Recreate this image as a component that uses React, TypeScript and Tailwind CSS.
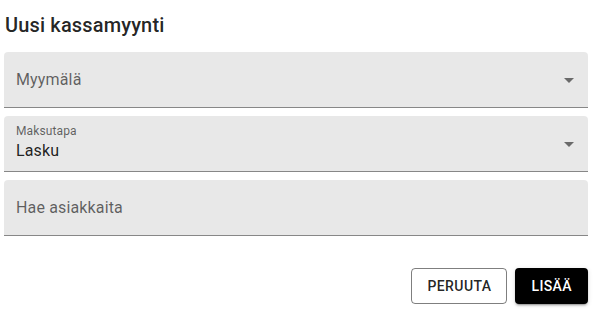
import React from "react";

function Arrow() {
  return (
    <svg viewBox="0 0 24 24" className="absolute right-[7px] top-1/2 -translate-y-1/2 w-6 h-6" fill="rgba(0,0,0,0.54)">
      <path d="M7 10l5 5 5-5z" />
    </svg>
  );
}

export default function App() {
  return (
    <div className="w-[593px] h-[313px] bg-white text-[rgba(0,0,0,0.87)]" style={{ fontFamily: "Roboto, 'Liberation Sans', sans-serif" }}>
      <div className="px-[5px] pt-[9px] h-[52px]">
        <h2 className="text-[20px] leading-[32px] font-medium tracking-[0.0075em]">Uusi kassamyynti</h2>
      </div>
      <div className="pl-[4px] pr-[5px] flex flex-col gap-[8px]">
        <div className="relative h-[56px] bg-[rgba(0,0,0,0.09)] rounded-t-[4px] border-b border-[rgba(0,0,0,0.42)] flex items-center px-[12px]">
          <span className="text-[16px] text-[rgba(0,0,0,0.6)] tracking-[0.00938em]">Myymälä</span>
          <Arrow />
        </div>
        <div className="relative h-[56px] bg-[rgba(0,0,0,0.09)] rounded-t-[4px] border-b border-[rgba(0,0,0,0.42)] flex flex-col px-[12px] pt-[7px]">
          <span className="text-[12px] leading-[16px] text-[rgba(0,0,0,0.6)] tracking-[0.00938em]">Maksutapa</span>
          <span className="text-[16px] leading-[24px] tracking-[0.00938em]">Lasku</span>
          <Arrow />
        </div>
        <div className="relative h-[56px] bg-[rgba(0,0,0,0.09)] rounded-t-[4px] border-b border-[rgba(0,0,0,0.42)] flex items-center px-[12px]">
          <span className="text-[16px] text-[rgba(0,0,0,0.6)] tracking-[0.00938em]">Hae asiakkaita</span>
        </div>
      </div>
      <div className="flex justify-end gap-[8px] pr-[5px] pt-[32px]">
        <button className="h-[36px] px-[15px] border border-[rgba(0,0,0,0.5)] rounded-[4px] text-[14px] font-medium uppercase tracking-[0.02857em] text-[rgba(0,0,0,0.87)]">
          Peruuta
        </button>
        <button className="h-[36px] px-[16px] bg-black text-white rounded-[4px] text-[14px] font-medium uppercase tracking-[0.02857em] shadow-[0_3px_1px_-2px_rgba(0,0,0,0.2),0_2px_2px_0_rgba(0,0,0,0.14),0_1px_5px_0_rgba(0,0,0,0.12)]">
          Lisää
        </button>
      </div>
    </div>
  );
}
